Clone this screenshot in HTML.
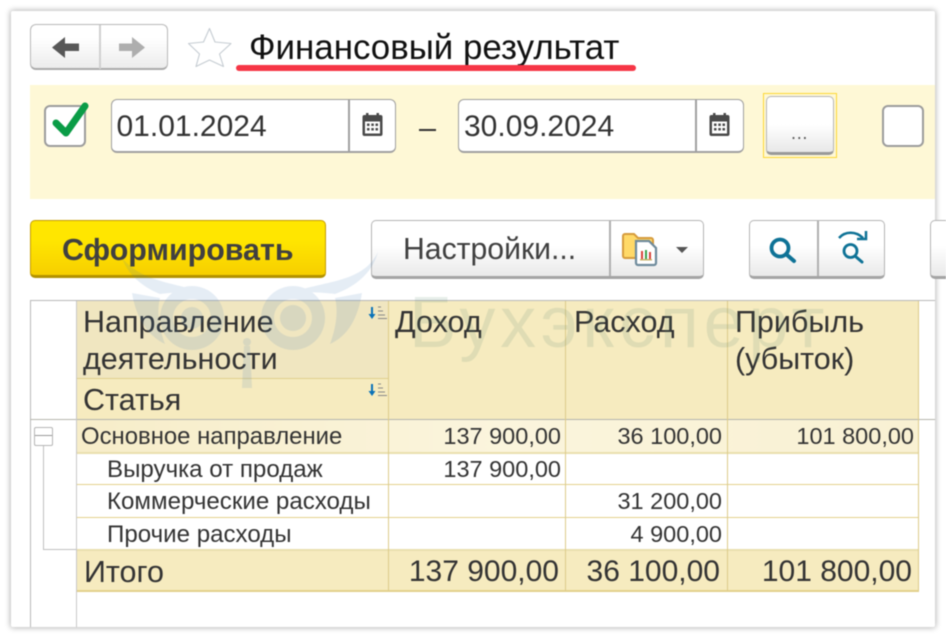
<!DOCTYPE html>
<html lang="ru"><head><meta charset="utf-8">
<style>
html,body{margin:0;padding:0;background:#fff;width:946px;height:638px;overflow:hidden}
*{box-sizing:border-box}
body{font-family:"Liberation Sans",sans-serif;color:#333;position:relative}
#root{position:absolute;left:0;top:0;width:946px;height:638px;filter:blur(.45px);overflow:hidden}
.a{position:absolute}
.t{position:absolute;white-space:nowrap;line-height:1}
.r{position:absolute;white-space:nowrap;line-height:1;text-align:right}
.btn{position:absolute;border:1px solid #b4b4b4;border-bottom:3px solid #a4a4a4;border-radius:5px;background:linear-gradient(#fff 45%,#e9e9e9)}
.h{font-size:30.500px;color:#333}
.b{font-size:24.100px}
.n{font-size:23.500px}
.m{font-size:30px}
</style></head><body><div id="root">
<div class="a" style="left:11px;top:11px;width:924px;height:616px;background:#fff;box-shadow:0 0 6px 1px rgba(0,0,0,.28);border-radius:2px"></div>

<!-- nav -->
<div class="a" style="left:30px;top:24px;width:138px;height:46px;border:1px solid #b9b9b9;border-bottom:2px solid #aaa;border-radius:6px;background:linear-gradient(#fff 30%,#ececec)"></div>
<div class="a" style="left:99px;top:25px;width:1.500px;height:44px;background:#d0d0d0"></div>
<svg class="a" style="left:0;top:0" width="946" height="100">
<path d="M52 47.500 L65 37 V43.500 H79 V51 H65 V58 Z" fill="#575757"/>
<path d="M145 47.500 L132 37 V43.500 H119 V51 H132 V58 Z" fill="#aeaeae"/>
<path d="M209.500 28.500 L215 42 L231 43.500 L219.500 54 L223.500 66.500 L209.500 60 L196 66.500 L199.500 54 L188.500 43.500 L203.500 42 Z" fill="#fff" stroke="#c5ccd2" stroke-width="1.100" stroke-linejoin="round"/>
</svg>
<div class="t" style="left:249px;top:31px;font-size:34.900px;color:#111">Финансовый результат</div>
<div class="a" style="left:236px;top:65px;width:400px;height:6px;background:#f63646;border-radius:3px"></div>

<!-- filter panel -->
<div class="a" style="left:30px;top:85px;width:905px;height:114px;background:#fef8d6"></div>
<div class="a" style="left:44px;top:105px;width:42px;height:42px;background:#fff;border:2.500px solid #9c9c9c;border-radius:6px"></div>
<svg class="a" style="left:44px;top:95px" width="50" height="50"><path d="M12 28 L22 38 L41 11" fill="none" stroke="#0a9c46" stroke-width="7" stroke-linecap="round" stroke-linejoin="round"/></svg>

<div class="a" style="left:111px;top:99px;width:285px;height:54px;background:#fff;border:1.500px solid #a0a0a0;border-bottom-width:2px;border-radius:6px"></div>
<div class="a" style="left:348px;top:100px;width:1.500px;height:52px;background:#a0a0a0"></div>
<div class="t" style="left:116.500px;top:112px;font-size:30px;color:#333">01.01.2024</div>
<div class="a" style="left:419px;top:129px;width:17px;height:2px;background:#333"></div>
<div class="a" style="left:458px;top:99px;width:286px;height:54px;background:#fff;border:1.500px solid #a0a0a0;border-bottom-width:2px;border-radius:6px"></div>
<div class="a" style="left:695px;top:100px;width:1.500px;height:52px;background:#a0a0a0"></div>
<div class="t" style="left:464px;top:112px;font-size:30px;color:#333">30.09.2024</div>
<svg class="a" style="left:361px;top:112px" width="24" height="26"><rect x="1.500" y="3" width="20" height="21" rx="2" fill="#4a4a4a"/><rect x="4" y="9.500" width="15" height="12" fill="#fff"/><rect x="5" y="1" width="2.500" height="5" fill="#4a4a4a"/><rect x="15.500" y="1" width="2.500" height="5" fill="#4a4a4a"/><g fill="#4a4a4a"><rect x="6" y="11.500" width="2.500" height="2.500"/><rect x="10.300" y="11.500" width="2.500" height="2.500"/><rect x="14.500" y="11.500" width="2.500" height="2.500"/><rect x="6" y="16" width="2.500" height="2.500"/><rect x="10.300" y="16" width="2.500" height="2.500"/><rect x="14.500" y="16" width="2.500" height="2.500"/></g></svg>
<svg class="a" style="left:708px;top:112px" width="24" height="26"><rect x="1.500" y="3" width="20" height="21" rx="2" fill="#4a4a4a"/><rect x="4" y="9.500" width="15" height="12" fill="#fff"/><rect x="5" y="1" width="2.500" height="5" fill="#4a4a4a"/><rect x="15.500" y="1" width="2.500" height="5" fill="#4a4a4a"/><g fill="#4a4a4a"><rect x="6" y="11.500" width="2.500" height="2.500"/><rect x="10.300" y="11.500" width="2.500" height="2.500"/><rect x="14.500" y="11.500" width="2.500" height="2.500"/><rect x="6" y="16" width="2.500" height="2.500"/><rect x="10.300" y="16" width="2.500" height="2.500"/><rect x="14.500" y="16" width="2.500" height="2.500"/></g></svg>

<div class="a" style="left:763px;top:93px;width:74px;height:65px;border:1px solid #fdd835"></div>
<div class="btn" style="left:766px;top:96px;width:68px;height:59px;border-color:#b5b5b5;border-bottom-color:#999;background:linear-gradient(#fff 50%,#e8e8e8)"></div>
<div class="t" style="left:791px;top:124px;font-size:18px;color:#555;letter-spacing:.7px">...</div>
<div class="a" style="left:882px;top:105px;width:42px;height:42px;background:#fff;border:2.500px solid #9c9c9c;border-radius:6px"></div>

<!-- toolbar -->
<div class="a" style="left:30px;top:220px;width:296px;height:58px;border:1px solid #c59d00;border-bottom:3px solid #b39200;border-radius:5px;background:linear-gradient(#ffe600 35%,#f7cf00)"></div>
<div class="t" style="left:62px;top:235px;font-size:30.400px;font-weight:bold;color:#404040">Сформировать</div>
<div class="btn" style="left:371px;top:220px;width:333px;height:59px"></div>
<div class="a" style="left:609px;top:221px;width:1.500px;height:55px;background:#b0b0b0"></div>
<div class="t" style="left:403px;top:235px;font-size:30.200px;color:#404040">Настройки...</div>
<svg class="a" style="left:620px;top:228px" width="72" height="42">
<path d="M3 8 a2 2 0 0 1 2-2 H14 L18 10 H31 a2 2 0 0 1 2 2 V30 H5 a2 2 0 0 1-2-2 Z" fill="#ffd968" stroke="#d69b3c" stroke-width="2"/>
<path d="M16 13 H29 L36 20 V35 a2 2 0 0 1-2 2 H18 a2 2 0 0 1-2-2 Z" fill="#fff" stroke="#6f8b9c" stroke-width="2.200"/>
<rect x="21" y="23" width="2" height="8" fill="#d8433a"/><rect x="25" y="22" width="2" height="9" fill="#3aa04a"/><rect x="29" y="24" width="2" height="7" fill="#d8433a"/><rect x="20" y="31" width="12" height="1.500" fill="#c9b26a"/>
<path d="M56 19 H68 L62 25 Z" fill="#555"/>
</svg>
<div class="btn" style="left:749px;top:220px;width:136px;height:59px"></div>
<div class="a" style="left:817px;top:221px;width:1.500px;height:55px;background:#b0b0b0"></div>
<svg class="a" style="left:760px;top:228px" width="120" height="44">
<circle cx="20" cy="20" r="8.500" fill="none" stroke="#0e7296" stroke-width="3.800"/><path d="M26.500 26.500 L34 33" stroke="#0e7296" stroke-width="4" stroke-linecap="round"/>
<circle cx="90.500" cy="23" r="6.500" fill="none" stroke="#0e7296" stroke-width="2.800"/><path d="M95 28 L102 34" stroke="#0e7296" stroke-width="3" stroke-linecap="round"/>
<path d="M79 10 C85 3 96 3 103 10" fill="none" stroke="#0e7296" stroke-width="2.500"/><path d="M97 11 H106 V3" fill="none" stroke="#0e7296" stroke-width="2.500"/>
</svg>
<div class="btn" style="left:930px;top:220px;width:30px;height:59px"></div>

<!-- table -->
<div class="a" style="left:76px;top:301px;width:843px;height:118px;background:#f6ebbf"></div>
<div class="a" style="left:76px;top:301px;width:313px;height:77px;background:#f0e6c0"></div>
<div class="a" style="left:76px;top:420px;width:843px;height:33px;background:linear-gradient(90deg,#f7edc9,#fbf5dd 50%,#f9f1d3)"></div>
<div class="a" style="left:76px;top:550px;width:843px;height:41px;background:#f6ebbf"></div>
<div class="a" style="left:30px;top:300px;width:905px;height:1px;background:#b8b8b8"></div>
<div class="a" style="left:30px;top:300px;width:1px;height:327px;background:#b8b8b8"></div>
<div class="a" style="left:76px;top:378px;width:313px;height:1px;background:#dfcf8e"></div>
<div class="a" style="left:30px;top:419px;width:905px;height:1px;background:#b5b5ad"></div>
<div class="a" style="left:76px;top:452px;width:843px;height:1.500px;background:#eadfae"></div>
<div class="a" style="left:76px;top:484px;width:843px;height:1px;background:#e3d18c"></div>
<div class="a" style="left:76px;top:517px;width:843px;height:1px;background:#e3d18c"></div>
<div class="a" style="left:76px;top:549px;width:843px;height:1.500px;background:#eadfae"></div>
<div class="a" style="left:76px;top:590px;width:843px;height:1.500px;background:#e3d18c"></div>
<div class="a" style="left:75.500px;top:301px;width:1px;height:326px;background:#c8c8c8"></div>
<div class="a" style="left:388px;top:301px;width:1px;height:290px;background:#dccb8a"></div>
<div class="a" style="left:565px;top:301px;width:1px;height:290px;background:#dccb8a"></div>
<div class="a" style="left:727px;top:301px;width:1px;height:290px;background:#dccb8a"></div>
<div class="a" style="left:918px;top:301px;width:1px;height:290px;background:#dccb8a"></div>

<div class="t h" style="left:83px;top:307px">Направление</div>
<div class="t h" style="left:83px;top:344px">деятельности</div>
<div class="t h" style="left:83px;top:385px">Статья</div>
<div class="t h" style="left:395px;top:307px">Доход</div>
<div class="t h" style="left:574px;top:307px">Расход</div>
<div class="t h" style="left:735px;top:307px">Прибыль</div>
<div class="t h" style="left:735px;top:344px">(убыток)</div>
<svg class="a" style="left:366px;top:304px" width="24" height="100">
<path d="M6 3 V12" stroke="#0a72b8" stroke-width="2"/><path d="M2.500 10 H9.500 L6 15 Z" fill="#0a72b8"/><path d="M12 3 H15 M12 7 H17 M12 11 H19 M12 14.500 H21" stroke="#888" stroke-width="1"/>
<path d="M6 80 V89" stroke="#0a72b8" stroke-width="2"/><path d="M2.500 87 H9.500 L6 92 Z" fill="#0a72b8"/><path d="M12 80 H15 M12 84 H17 M12 88 H19 M12 91.500 H21" stroke="#888" stroke-width="1"/>
</svg>

<div class="a" style="left:34px;top:427px;width:19px;height:19px;background:#fff;border:1px solid #b5b5b5;border-radius:2px"></div>
<div class="a" style="left:35px;top:435px;width:17px;height:1px;background:#999"></div>
<div class="a" style="left:43px;top:446px;width:1px;height:104px;background:#c0c0c0"></div>
<div class="a" style="left:43px;top:549px;width:33px;height:1px;background:#c0c0c0"></div>

<div class="t b" style="left:81px;top:424.500px;font-size:23.900px">Основное направление</div>
<div class="t b" style="left:107px;top:457.500px">Выручка от продаж</div>
<div class="t b" style="left:107px;top:490px">Коммерческие расходы</div>
<div class="t b" style="left:107px;top:522.500px">Прочие расходы</div>
<div class="t h" style="left:84px;top:557px">Итого</div>

<div class="r n" style="right:385px;top:425px">137 900,00</div>
<div class="r n" style="right:224px;top:425px">36 100,00</div>
<div class="r n" style="right:32px;top:425px">101 800,00</div>
<div class="r n" style="right:385px;top:458px">137 900,00</div>
<div class="r n" style="right:224px;top:490px">31 200,00</div>
<div class="r n" style="right:224px;top:523px">4 900,00</div>
<div class="r m" style="right:387px;top:557px">137 900,00</div>
<div class="r m" style="right:226px;top:557px">36 100,00</div>
<div class="r m" style="right:34px;top:557px">101 800,00</div>

<!-- watermark -->
<svg class="a" style="left:0;top:0" width="946" height="638">
<g fill="#3f7cba" opacity=".13">
<path d="M122 258 C145 285 180 282 212 296 C195 291 175 292 160 294 C145 288 128 276 122 258 Z"/>
<path d="M378 252 C362 285 320 280 282 296 C298 291 320 292 335 294 C352 288 372 275 378 252 Z"/>
<path d="M132 293 C136 318 148 336 165 344 C158 325 157 310 160 298 Z"/>
<path d="M362 293 C358 318 348 336 330 344 C337 325 338 310 335 298 Z"/>
<path fill-rule="evenodd" d="M192 286 a32 32 0 1 0 .1 0 Z M192 299 a19 19 0 1 1 -.1 0 Z"/>
<path fill-rule="evenodd" d="M293 286 a32 32 0 1 0 .1 0 Z M293 299 a19 19 0 1 1 -.1 0 Z"/>
<circle cx="192" cy="318" r="11"/><circle cx="293" cy="318" r="13"/>
<circle cx="247" cy="342" r="4"/><path d="M244 346 H250 L252 388 H242 Z"/>
</g>
<text x="409" y="347" font-family="Liberation Sans" font-size="72" fill="#5d8a74" letter-spacing="4.700" opacity=".14">Бухэксперт</text>
</svg>
</div></body></html>
